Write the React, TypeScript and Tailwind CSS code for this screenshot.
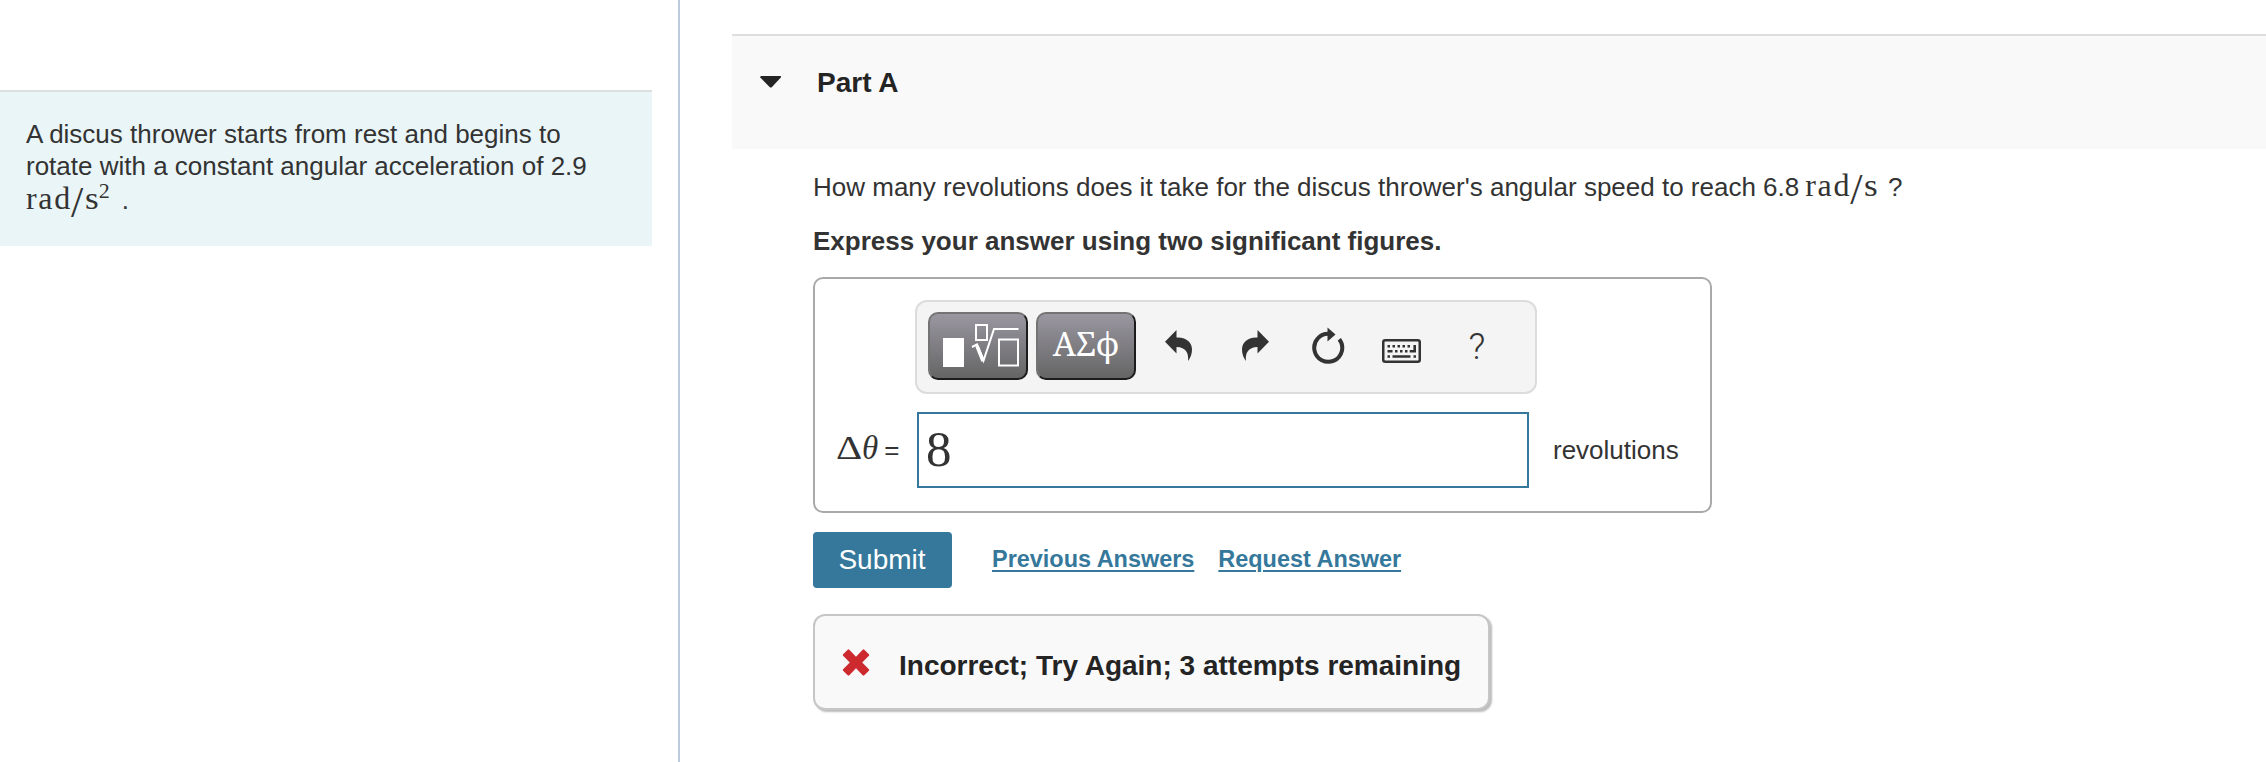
import { useState } from "react";
import type { ReactNode } from "react";

interface MathUnitProps {
  squared?: boolean;
}

function MathUnit({ squared = false }: MathUnitProps) {
  return (
    <span className="flex items-baseline font-['Liberation_Serif',serif] text-[32px] leading-6">
      <span className="tracking-[1.7px]">rad</span>
      <span className="relative top-[8px] -ml-px text-[44px] leading-5">/</span>
      <span className="ml-[2px] inline-block origin-left scale-x-110">s</span>
      {squared && (
        <span className="relative -top-[11px] ml-px text-[22px] leading-4">2</span>
      )}
    </span>
  );
}

interface ToolButtonProps {
  label: string;
  children: ReactNode;
  className?: string;
}

function PaletteButton({ label, children }: ToolButtonProps) {
  return (
    <button
      aria-label={label}
      className="flex h-[68px] w-[100px] items-center justify-center rounded-[10px] border-2 border-t-[#747474] border-l-[#747474] border-r-[#1c1c1c] border-b-[#1c1c1c] bg-linear-to-b from-[#9a97a1] to-[#656565] text-white"
    >
      {children}
    </button>
  );
}

function ToolButton({ label, children, className = "" }: ToolButtonProps) {
  return (
    <button
      aria-label={label}
      className={`flex h-[68px] items-center justify-center text-[#333] ${className}`}
    >
      {children}
    </button>
  );
}

function TemplateIcon() {
  return (
    <svg width="96" height="64" viewBox="0 0 96 64" fill="none">
      <rect x="13" y="24" width="21" height="29" fill="#fff" />
      <rect x="46" y="11" width="11" height="15" stroke="#fff" strokeWidth="2" />
      <rect x="69" y="25.500" width="19" height="26" stroke="#fff" strokeWidth="2" />
      <path d="M42 33l5-2.500 6.500 16 L64 15h24.500" stroke="#fff" strokeWidth="2" />
      <path d="M47 32l6 15" stroke="#fff" strokeWidth="3.500" />
    </svg>
  );
}

function UndoIcon({ flipped = false }: { flipped?: boolean }) {
  return (
    <svg
      width="28"
      height="32"
      viewBox="0 0 28 32"
      fill="currentColor"
      className={flipped ? "-scale-x-100" : ""}
    >
      <path d="M0 11.700 11.500 0v7.500C22 7 27 13 27 19.500c0 4.500-1.500 8.500-4 11.500 1-7.500-2-14-11.500-14v6.500z" />
    </svg>
  );
}

function ResetIcon() {
  return (
    <svg width="34" height="38" viewBox="0 0 34 38" fill="none">
      <path
        d="M18 6.800A14 14 0 1 0 28.300 12.200"
        stroke="currentColor"
        strokeWidth="4"
      />
      <path d="M16.500 0.500 24.500 7.500 16.500 14.500z" fill="currentColor" />
    </svg>
  );
}

function KeyboardIcon() {
  return (
    <svg width="39" height="24" viewBox="0 0 39 24" fill="none">
      <rect x="1.250" y="1.250" width="36.500" height="21.500" rx="2" stroke="currentColor" strokeWidth="2.500" />
      <path
        d="M5.500 7.300h2.500m2.500 0h2.500m2.500 0h2.500m2.500 0h2.500m2.500 0h2.500M5.500 12.300h5m2.500 0h2.500m2.500 0h2.500m2.500 0h2.500M5.500 17.500h2.500m2.500 0h18m3 0h2.500"
        stroke="currentColor"
        strokeWidth="2.400"
      />
      <path d="M32.700 6v6.300h-5" stroke="currentColor" strokeWidth="2.600" />
    </svg>
  );
}

function CrossIcon() {
  return (
    <svg width="28" height="28" viewBox="0 0 28 28" fill="#cc2a2e">
      <path d="M5.700 0.700Q6.500 0 7.300 0.700L14 7.700l6.700-7q.8-.7 1.600 0l4.600 4.500q.7.800 0 1.600L20.200 13.500l6.700 6.700q.7.800 0 1.600l-4.600 4.500q-.8.700-1.600 0L14 19.300l-6.700 7q-.8.700-1.600 0L1.100 21.800q-.7-.8 0-1.600l6.700-6.700L1.100 6.800q-.7-.8 0-1.600z" />
    </svg>
  );
}

function AnswerBox() {
  const [answer, setAnswer] = useState("8");

  return (
    <div className="mt-5 h-[236px] w-[899px] rounded-[10px] border-2 border-[#a9a9a9] bg-white">
      {/* Equation toolbar */}
      <div className="mt-[21px] ml-[100px] flex h-[94px] w-[622px] rounded-xl border-2 border-[#dcdcdc] bg-[#f4f4f4] pt-[10px] pl-[11px]">
        <div className="flex gap-2">
          <PaletteButton label="Templates">
            <TemplateIcon />
          </PaletteButton>
          <PaletteButton label="Symbols">
            <span className="-mt-[6px] font-['Noto_Serif','DejaVu_Serif',serif] text-[33px] leading-none">
              ΑΣϕ
            </span>
          </PaletteButton>
        </div>
        <ToolButton label="Undo" className="ml-[29px] w-[28px]">
          <UndoIcon />
        </ToolButton>
        <ToolButton label="Redo" className="ml-[48px] w-[28px]">
          <UndoIcon flipped />
        </ToolButton>
        <ToolButton label="Reset" className="ml-[42px] w-[34px]">
          <ResetIcon />
        </ToolButton>
        <ToolButton label="Keyboard shortcuts" className="ml-[37px] w-[39px] pt-[9px]">
          <KeyboardIcon />
        </ToolButton>
        <ToolButton label="Help" className="ml-[46px] w-[20px]">
          <span className="font-['Roboto',sans-serif] text-[37px] leading-none font-light">
            ?
          </span>
        </ToolButton>
      </div>

      {/* Answer row */}
      <div className="mt-[18px] flex h-[76px] items-center">
        <div className="flex w-[102px] items-baseline pb-[5px] pl-[21px]">
          <span className="inline-block w-[26px] origin-left scale-x-120 font-['Liberation_Serif',serif] text-[34px] leading-none">
            Δ
          </span>
          <span className="font-['Liberation_Serif',serif] text-[33px] leading-none italic">
            θ
          </span>
          <span className="ml-[6px] text-[26px] leading-none">=</span>
        </div>
        <input
          value={answer}
          onChange={(e) => setAnswer(e.target.value)}
          className="h-[76px] w-[612px] border-2 border-[#35789b] bg-white pb-[2px] pl-[7px] font-['Liberation_Serif',serif] text-[51px] leading-none outline-none"
        />
        <span className="ml-[24px]">revolutions</span>
      </div>
    </div>
  );
}

export default function App() {
  return (
    <div className="flex h-[762px] w-[2266px] overflow-hidden bg-white font-['Liberation_Sans',Arial,sans-serif] text-[26px] leading-8 text-[#333]">
      {/* Problem statement */}
      <aside className="w-[680px] shrink-0 border-r-2 border-[#bccadb] pt-[90px]">
        <div className="h-[156px] w-[652px] border-t-2 border-[#dcdfe0] bg-[#eaf5f8] pt-[26px] pl-[26px]">
          <p>A discus thrower starts from rest and begins to</p>
          <p>rotate with a constant angular acceleration of 2.9</p>
          <p className="mt-[2px] flex h-8 items-baseline">
            <MathUnit squared />
            <span className="ml-[12px]">.</span>
          </p>
        </div>
      </aside>

      <main className="flex-1 pt-[34px] pl-[52px]">
        <header className="flex h-[115px] border-t-2 border-[#dedede] bg-[#f9f9f9] pt-[31px] pl-[28px] text-[#242424]">
          <svg width="22" height="12" viewBox="0 0 22 12" className="mt-[9px]" fill="currentColor">
            <path d="M1 0h19.500q1 0.500 0.300 1.600L12 11q-1.200 1-2.400 0L0.300 1.600Q0 0.400 1 0z" />
          </svg>
          <h2 className="ml-[35px] text-[28px] font-bold">Part A</h2>
        </header>

        <div className="pl-[81px]">
          <p className="mt-[22px] flex h-8 items-baseline">
            <span className="mr-[6px]">
              How many revolutions does it take for the discus thrower's angular speed to reach 6.8
            </span>
            <MathUnit />
            <span className="ml-[11px]">?</span>
          </p>
          <p className="mt-[22px] font-bold">
            Express your answer using two significant figures.
          </p>

          <AnswerBox />

          <div className="mt-[19px] flex h-[56px] items-center">
            <button className="h-[56px] w-[139px] rounded-[4px] bg-[#35789b] pr-px text-[28px] text-white">
              Submit
            </button>
            <a
              href="#"
              className="-mt-[2px] ml-[40px] text-[23.450px] font-bold text-[#35789b] underline decoration-2 underline-offset-[3px]"
            >
              Previous Answers
            </a>
            <a
              href="#"
              className="-mt-[2px] ml-[24px] text-[23.450px] font-bold text-[#35789b] underline decoration-2 underline-offset-[3px]"
            >
              Request Answer
            </a>
          </div>

          {/* Feedback */}
          <div className="mt-[26px] flex h-[96px] w-[677px] rounded-[12px] border-2 border-[#c6c6c6] bg-[#f9f9f9] pt-[33px] pl-[27px] text-[#242424] shadow-[2px_2px_2px_#bbb]">
            <CrossIcon />
            <span className="mt-px ml-[29px] text-[28px] font-bold whitespace-nowrap">
              Incorrect; Try Again; 3 attempts remaining
            </span>
          </div>
        </div>
      </main>
    </div>
  );
}
